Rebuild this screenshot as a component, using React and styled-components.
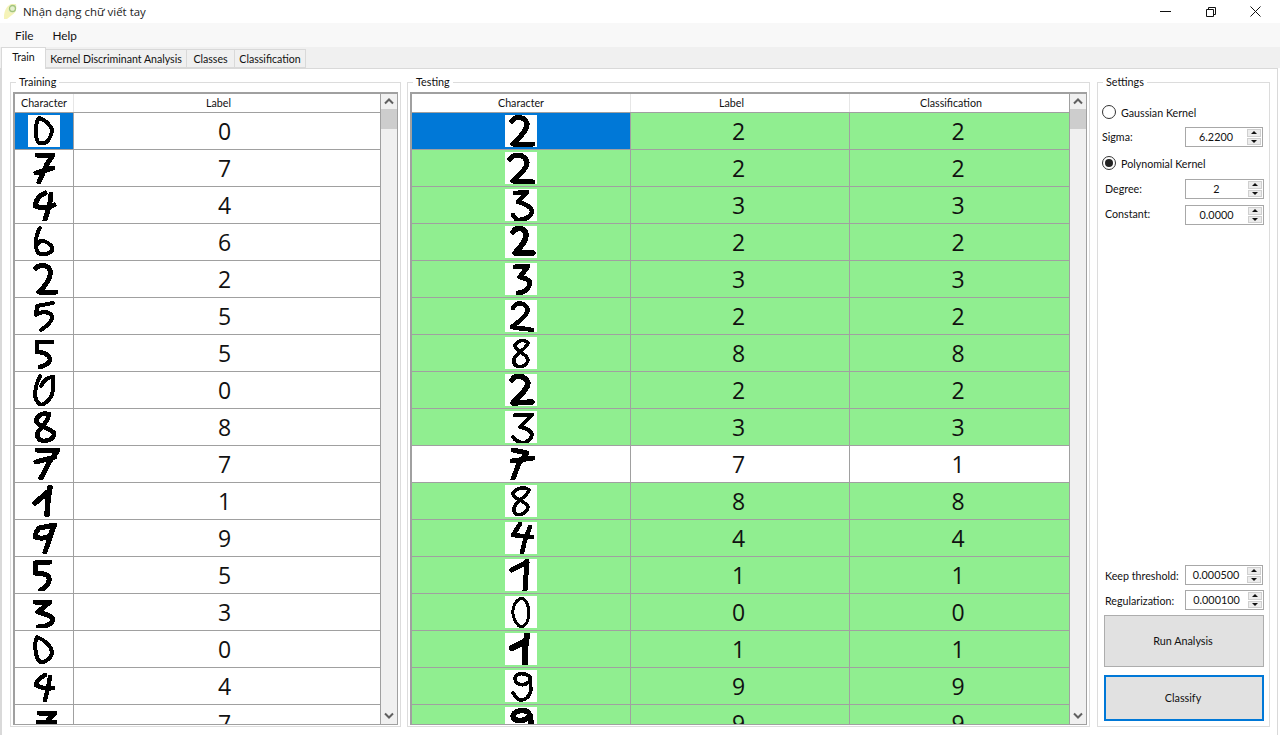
import React from "react";
import styled, { createGlobalStyle } from "styled-components";

const Global = createGlobalStyle`
  html, body { margin: 0; padding: 0; background: #fff; overflow: hidden; }
  body { font-family: Lato, "Open Sans", "Noto Sans CJK SC", sans-serif; font-size: 10.7px; color: #111; }
  * { box-sizing: border-box; }
`;

const Win = styled.div`
  width: 1280px;
  height: 735px;
  display: flex;
  flex-direction: column;
  overflow: hidden;
  background: #fff;
`;

const TitleBar = styled.div`
  height: 23px;
  display: flex;
  align-items: center;
  padding: 0 2px 0 3px;
  background: #fff;
`;
const TitleText = styled.div`
  margin-left: 5px;
  padding-bottom: 1px;
  font-family: "Open Sans", sans-serif;
  font-size: 11.45px;
  color: #222;
`;
const WinControls = styled.div`
  margin-left: auto;
  display: flex;
`;
const WinButton = styled.div`
  width: 45px;
  height: 23px;
  display: flex;
  align-items: center;
  justify-content: center;
  svg { display: block; }
`;

const MenuBar = styled.div`
  height: 24px;
  display: flex;
  align-items: center;
  gap: 19px;
  padding-left: 15px;
  background: #f8f8f8;
  font-size: 11.8px;
`;

const TabStrip = styled.div`
  height: 21px;
  display: flex;
  align-items: flex-end;
  padding-left: 1px;
  background: #f0f0f0;
`;
const Tab = styled.div`
  height: ${(p) => (p.$active ? "22px" : "19px")};
  width: ${(p) => p.$w}px;
  margin-bottom: ${(p) => (p.$active ? "-1px" : "0")};
  padding-bottom: ${(p) => (p.$active ? "3px" : "0")};
  background: ${(p) => (p.$active ? "#fff" : "#f0f0f0")};
  border: 1px solid #d9d9d9;
  border-bottom: ${(p) => (p.$active ? "none" : "1px solid #d9d9d9")};
  border-left: ${(p) => (p.$active ? "1px solid #d9d9d9" : "none")};
  display: flex;
  align-items: center;
  justify-content: center;
  position: relative;
  z-index: ${(p) => (p.$active ? 1 : 0)};
  white-space: nowrap;
  font-size: 10.6px;
`;

const Panel = styled.div`
  width: 1278px;
  flex: 1;
  min-height: 0;
  display: flex;
  gap: 6px;
  padding: 6px 7px 8px 8px;
  border-style: solid;
  border-width: 1px 1px 0 2px;
  border-color: #d9d9d9;
  background: #fff;
`;

const Group = styled.fieldset`
  width: ${(p) => p.$w}px;
  margin: ${(p) => (p.$left ? `0 0 0 ${p.$left}px` : "0")};
  padding: ${(p) => (p.$settings ? "0 0 5px 0" : "3px 2px 1px 2px")};
  border: 1px solid #dcdcdc;
  display: flex;
  flex-direction: column;
  min-height: 0;
  min-width: 0;
`;
const Legend = styled.legend`
  margin-left: ${(p) => p.$m}px;
  padding: 0 3px;
  height: 14px;
  line-height: 14px;
  font-size: 10.8px;
`;

const GridBox = styled.div`
  flex: 1;
  min-height: 0;
  display: flex;
  border-style: solid;
  border-color: #a0a0a0;
  border-width: 2px 1px 1px 2px;
  background: #fff;
`;
const GridBody = styled.div`
  flex: 1;
  min-width: 0;
  overflow: hidden;
`;
const Row = styled.div`
  display: grid;
  grid-template-columns: ${(p) => p.$cols};
  height: ${(p) => (p.$head ? "19px" : "37px")};
  border-bottom: 1px solid #a0a0a0;
`;
const HeadCell = styled.div`
  display: flex;
  align-items: center;
  justify-content: center;
  padding-right: ${(p) => p.$shift}px;
  padding-bottom: 1px;
  background: #fff;
  border-right: 1px solid #e6e6e6;
  font-size: 10.7px;
  &:last-child { border-right: none; }
`;
const toneColor = { sel: "#0078d7", ok: "#90ee90", none: "#fff" };
const Cell = styled.div`
  display: flex;
  align-items: center;
  justify-content: center;
  padding-right: ${(p) => p.$shift}px;
  background: ${(p) => toneColor[p.$tone]};
  border-right: 1px solid #a0a0a0;
  font-family: "Open Sans", sans-serif;
  font-size: 23px;
  color: #111;
  &:last-child { border-right: none; }
`;
const DigitSvg = styled.svg`
  display: block;
  width: 32px;
  height: 32px;
  background: #fff;
  shape-rendering: crispEdges;
`;

const ScrollBar = styled.div`
  width: 17px;
  display: flex;
  flex-direction: column;
  background: #f0f0f0;
  border-left: 1px solid #a0a0a0;
`;
const ScrollArrow = styled.div`
  height: ${(p) => p.$h}px;
  display: flex;
  align-items: center;
  justify-content: center;
  margin-top: ${(p) => (p.$end ? "auto" : "0")};
`;
const ScrollThumb = styled.div`
  height: 20px;
  background: #cdcdcd;
`;

const SettingRow = styled.div`
  display: flex;
  align-items: center;
  height: ${(p) => p.$h || 20}px;
  margin-top: ${(p) => p.$top}px;
  padding-left: ${(p) => p.$indent}px;
  padding-right: ${(p) => (p.$narrow ? 6 : 5)}px;
  font-size: 10.7px;
  white-space: nowrap;
`;
const FieldLabel = styled.span`
  padding-bottom: ${(p) => p.$lift || 2}px;
`;
const RadioDot = styled.span`
  width: 14px;
  height: 14px;
  border-radius: 50%;
  border: 1px solid #333;
  background: #fff;
  margin-right: 5px;
  display: flex;
  align-items: center;
  justify-content: center;
  &::after {
    content: "";
    display: ${(p) => (p.$on ? "block" : "none")};
    width: 8px;
    height: 8px;
    border-radius: 50%;
    background: #222;
  }
`;
const Spinner = styled.div`
  margin-left: auto;
  width: ${(p) => (p.$narrow ? 78 : 79)}px;
  height: 20px;
  display: flex;
  border: 1px solid #a8a8a8;
  background: #fff;
`;
const SpinValue = styled.div`
  flex: 1;
  display: flex;
  align-items: center;
  justify-content: center;
  font-size: 10.8px;
  padding-bottom: ${(p) => (p.$low ? 1 : 2)}px;
`;
const SpinButtons = styled.div`
  width: 16px;
  display: flex;
  flex-direction: column;
  padding: 1px;
  gap: 1px;
`;
const SpinArrow = styled.div`
  flex: 1;
  background: #ececec;
  border: 1px solid #cfcfcf;
  display: flex;
  align-items: center;
  justify-content: center;
  &::after {
    content: "";
    border-left: 3px solid transparent;
    border-right: 3px solid transparent;
    ${(p) => (p.$down ? "border-top: 3px solid #111;" : "border-bottom: 3px solid #111;")}
  }
`;
const BottomBlock = styled.div`
  margin-top: auto;
  display: flex;
  flex-direction: column;
`;
const ActionButton = styled.div`
  height: ${(p) => p.$h}px;
  margin: ${(p) => p.$top}px 5px 0 6px;
  padding: 0 2px 1px 0;
  display: flex;
  align-items: center;
  justify-content: center;
  background: #e1e1e1;
  border: ${(p) => (p.$focus ? "2px solid #0078d7" : "1px solid #adadad")};
  font-size: 10.8px;
`;

// handwritten samples, one stroke path per image (32x32 box)
const TRAIN = [
  [0, "M11 3C7 8 7 22 10 27C13 30 19 28 21 24C24 19 25 14 22 11C19 7 15 4 11 3", 4],
  [7, "M9 3L25 3L19 12L15 21L11 30M8 21L25 16", 5],
  [4, "M17 4C12 6 8 11 7 17C12 19 20 19 26 16M23 5C23 12 20 22 17 31", 5],
  [6, "M12 2C8 9 7 18 9 25C11 30 19 29 24 25C26 21 21 17 16 15C13 14 11 15 10 18", 4],
  [2, "M8 5C12 1 20 2 22 7C24 13 18 22 11 29L28 29", 5],
  [5, "M25 3L9 6L8 15C13 11 21 11 24 16C25 21 19 26 13 30", 4],
  [5, "M24 5L9 5L9 15C14 15 21 17 22 22C22 26 17 29 12 30", 4.5],
  [0, "M12 2C9 8 7 15 7 22C8 27 11 31 14 31C20 28 25 22 25 14C25 8 25 4 25 3C20 3 16 6 13 12", 4],
  [8, "M20 3C14 1 9 5 8 10C10 16 22 17 26 22C27 27 21 30 15 30C10 29 8 25 10 21C14 16 20 11 21 3", 4.5],
  [7, "M9 2L30 2L22 13L13 30M8 14L27 9", 5],
  [1, "M22 2L20 14L19 30M7 18L20 7", 5.5],
  [9, "M27 3L11 6C8 10 7 13 7 15C12 17 19 16 22 14L26 4L17 30", 5],
  [5, "M22 3L7 4L7 14C12 14 20 15 21 19C22 24 18 28 13 31", 5],
  [3, "M7 6L22 6L10 16C16 18 24 19 25 24C23 29 16 31 10 31", 5],
  [0, "M9 4C6 10 7 24 12 29C17 30 23 25 24 20C24 14 17 7 9 4", 4],
  [4, "M17 5C12 8 8 12 8 15C13 18 20 19 25 18M22 7L20 18L17 30", 4.5],
  [7, "M11 6L27 6L14 20L8 34M10 15L27 15", 5],
];
const TEST = [
  [2, "M7 6C10 1 19 1 22 8C23 15 14 23 8 29L28 29", 5, 2],
  [2, "M5 7C9 2 19 1 22 10C23 16 13 24 8 29L28 30", 5, 2],
  [3, "M10 4L22 3L13 13C19 14 27 18 27 23C25 29 19 31 12 31L8 26", 4.5, 3],
  [2, "M8 6C11 1 19 1 21 8C22 15 15 21 10 27L28 27", 5.5, 2],
  [3, "M10 4L23 3L15 14C20 15 25 17 25 21C23 27 18 30 13 30", 5, 3],
  [2, "M8 8C11 2 19 1 23 10C22 16 13 22 7 27C13 29 21 28 27 30", 4.5, 2],
  [8, "M23 6C20 2 13 3 10 8C9 14 22 16 23 23C22 28 17 31 12 29C7 27 8 21 13 17C17 13 22 10 23 6", 3.5, 8],
  [2, "M7 6C10 1 19 0 23 9C23 16 12 23 8 29L27 28", 5.5, 2],
  [3, "M10 4L27 4L15 16C21 17 27 20 27 24C26 29 21 32 17 32C13 31 10 29 8 26", 4, 3],
  [7, "M8 2L22 5L14 15L8 31M7 13L28 10", 5, 1],
  [8, "M24 5C20 1 11 3 8 8C7 14 22 16 23 22C22 28 16 31 11 29C7 26 9 20 14 16C19 12 23 9 24 5", 3.5, 8],
  [4, "M15 2L8 13L27 15M25 5L20 18L17 31", 4.5, 4],
  [1, "M22 1L21 16L20 31M7 11L22 3", 5, 1],
  [0, "M17 2C10 4 7 12 8 18C9 26 14 31 17 31C22 29 24 22 24 16C24 9 20 3 17 2", 3, 0],
  [1, "M22 2L20 16L20 30M7 15L21 8", 6, 1],
  [9, "M25 7C20 2 11 3 10 8C10 14 18 18 25 11M25 8L26 20C25 27 19 31 15 30C12 29 10 26 8 23", 3.5, 9],
  [9, "M23 5C18 2 9 4 8 9C9 14 17 16 24 10L25 8L28 28", 5.5, 9],
];

const TRAIN_COLS = "59px 1fr";
const TEST_COLS = "219px 219px 219px";

const Digit = ({ d, w }) => (
  <DigitSvg viewBox="0 0 32 32">
    <path d={d} fill="none" stroke="#000" strokeWidth={w} strokeLinecap="round" strokeLinejoin="round" />
  </DigitSvg>
);

const Chevron = ({ down }) => (
  <svg width="10" height="7" viewBox="0 0 10 7">
    <path d={down ? "M1 1.5L5 5.5L9 1.5" : "M1 5.5L5 1.5L9 5.5"} fill="none" stroke="#606060" strokeWidth="2" />
  </svg>
);

const Scroll = () => (
  <ScrollBar>
    <ScrollArrow $h={15}><Chevron /></ScrollArrow>
    <ScrollThumb />
    <ScrollArrow $h={17} $end><Chevron down /></ScrollArrow>
  </ScrollBar>
);

const Spin = ({ value, narrow, low }) => (
  <Spinner $narrow={narrow}>
    <SpinValue $low={low}>{value}</SpinValue>
    <SpinButtons>
      <SpinArrow />
      <SpinArrow $down />
    </SpinButtons>
  </Spinner>
);

const Logo = () => (
  <svg width="15" height="17" viewBox="0 0 15 17">
    <path d="M1 14C1 9 3 3 8 1L13 1C14 5 13 10 9 12L4 16L1 16Z" fill="#f5f3b8" />
    <path d="M7 2L13 2L13 8L9 10L5 8Z" fill="#e4efcf" />
    <circle cx="9.5" cy="5.5" r="3" fill="none" stroke="#a3c47c" strokeWidth="1.3" />
  </svg>
);

export default function App() {
  return (
    <Win>
      <Global />
      <TitleBar>
        <Logo />
        <TitleText>Nhận dạng chữ viết tay</TitleText>
        <WinControls>
          <WinButton>
            <svg width="11" height="11" viewBox="0 0 11 11"><path d="M0 5.5H11" stroke="#111" /></svg>
          </WinButton>
          <WinButton>
            <svg width="10" height="10" viewBox="0 0 10 10">
              <path d="M0.5 2.5H7.5V9.5H0.5ZM2.5 2.5V0.5H9.5V7.5H7.5" fill="none" stroke="#111" />
            </svg>
          </WinButton>
          <WinButton>
            <svg width="11" height="11" viewBox="0 0 11 11"><path d="M0.5 0.5L10.5 10.5M10.5 0.5L0.5 10.5" stroke="#111" /></svg>
          </WinButton>
        </WinControls>
      </TitleBar>
      <MenuBar>
        <span>File</span>
        <span>Help</span>
      </MenuBar>
      <TabStrip>
        <Tab $active $w={45}>Train</Tab>
        <Tab $w={141}>Kernel Discriminant Analysis</Tab>
        <Tab $w={48}>Classes</Tab>
        <Tab $w={71}>Classification</Tab>
      </TabStrip>
      <Panel>
        <Group $w={391}>
          <Legend $m={3}>Training</Legend>
          <GridBox>
            <GridBody>
              <Row $head $cols={TRAIN_COLS}>
                <HeadCell $shift={0}>Character</HeadCell>
                <HeadCell $shift={17}>Label</HeadCell>
              </Row>
              {TRAIN.map(([value, d, w], i) => (
                <Row key={i} $cols={TRAIN_COLS}>
                  <Cell $tone={i === 0 ? "sel" : "none"} $shift={0}><Digit d={d} w={w} /></Cell>
                  <Cell $tone="none" $shift={5}>{value}</Cell>
                </Row>
              ))}
            </GridBody>
            <Scroll />
          </GridBox>
        </Group>
        <Group $w={683}>
          <Legend $m={3}>Testing</Legend>
          <GridBox>
            <GridBody>
              <Row $head $cols={TEST_COLS}>
                <HeadCell $shift={0}>Character</HeadCell>
                <HeadCell $shift={17}>Label</HeadCell>
                <HeadCell $shift={17}>Classification</HeadCell>
              </Row>
              {TEST.map(([value, d, w, result], i) => {
                const tone = value === result ? "ok" : "none";
                return (
                  <Row key={i} $cols={TEST_COLS}>
                    <Cell $tone={i === 0 ? "sel" : tone} $shift={0}><Digit d={d} w={w} /></Cell>
                    <Cell $tone={tone} $shift={3}>{value}</Cell>
                    <Cell $tone={tone} $shift={3}>{result}</Cell>
                  </Row>
                );
              })}
            </GridBody>
            <Scroll />
          </GridBox>
        </Group>
        <Group $w={173} $left={1} $settings>
          <Legend $m={5}>Settings</Legend>
          <SettingRow $h={18} $top={14} $indent={4}>
            <RadioDot />
            Gaussian Kernel
          </SettingRow>
          <SettingRow $top={6} $indent={4} $narrow>
            <FieldLabel>Sigma:</FieldLabel>
            <Spin value="6.2200" narrow />
          </SettingRow>
          <SettingRow $h={18} $top={7} $indent={4}>
            <RadioDot $on />
            Polynomial Kernel
          </SettingRow>
          <SettingRow $top={7} $indent={7}>
            <FieldLabel>Degree:</FieldLabel>
            <Spin value="2" />
          </SettingRow>
          <SettingRow $top={6} $indent={7}>
            <FieldLabel $lift={4}>Constant:</FieldLabel>
            <Spin value="0.0000" />
          </SettingRow>
          <BottomBlock>
            <SettingRow $top={0} $indent={7} $narrow>
              Keep threshold:
              <Spin value="0.000500" narrow low />
            </SettingRow>
            <SettingRow $top={5} $indent={7}>
              Regularization:
              <Spin value="0.000100" low />
            </SettingRow>
            <ActionButton $h={52} $top={5}>Run Analysis</ActionButton>
            <ActionButton $h={46} $top={8} $focus>Classify</ActionButton>
          </BottomBlock>
        </Group>
      </Panel>
    </Win>
  );
}
